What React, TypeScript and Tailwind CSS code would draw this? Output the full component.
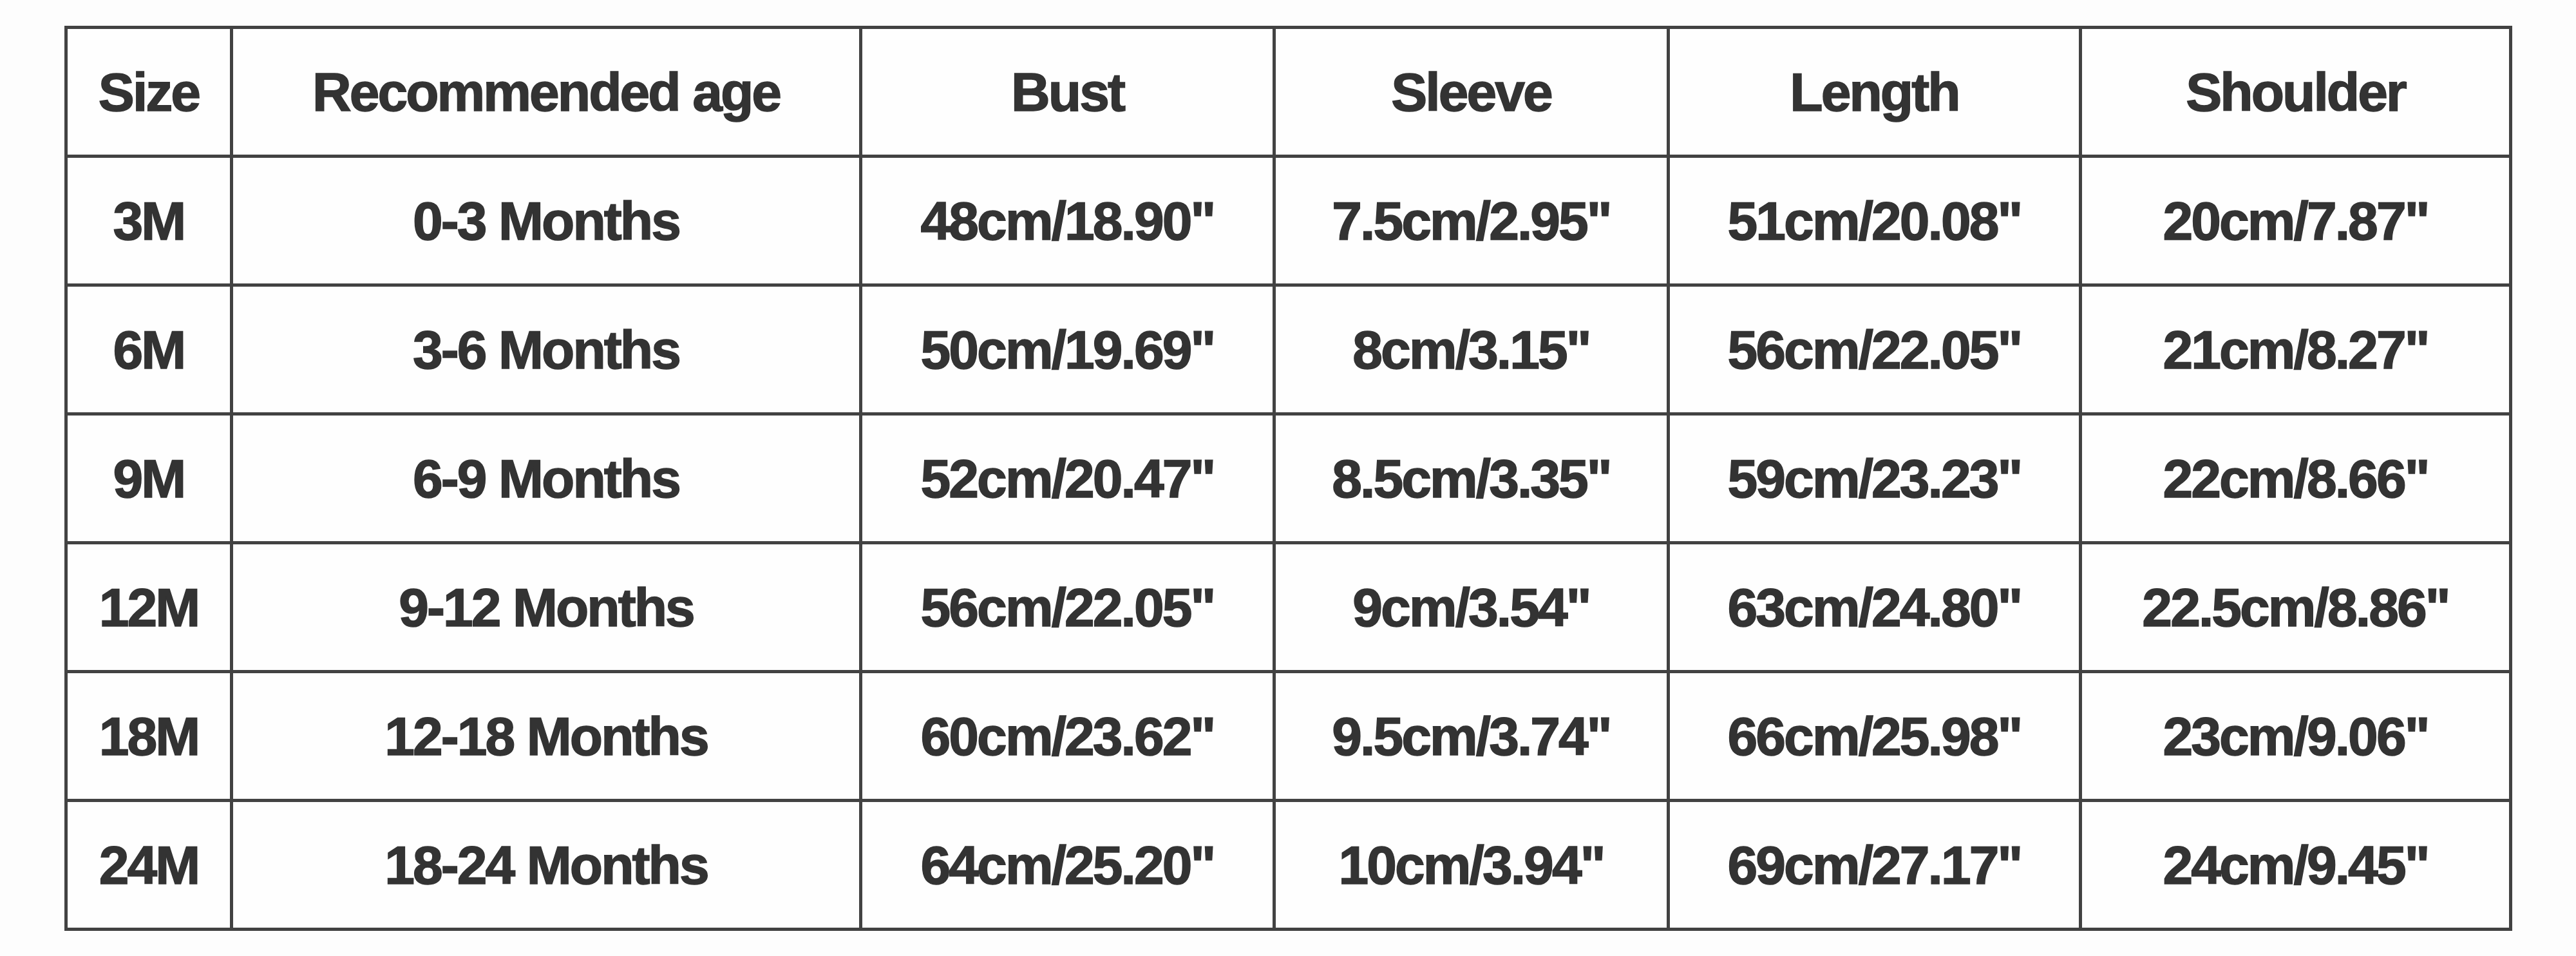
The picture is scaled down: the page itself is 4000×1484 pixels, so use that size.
import React from "react";

const headers = ["Size", "Recommended age", "Bust", "Sleeve", "Length", "Shoulder"];

const rows: string[][] = [
  ["3M", "0-3 Months", '48cm/18.90"', '7.5cm/2.95"', '51cm/20.08"', '20cm/7.87"'],
  ["6M", "3-6 Months", '50cm/19.69"', '8cm/3.15"', '56cm/22.05"', '21cm/8.27"'],
  ["9M", "6-9 Months", '52cm/20.47"', '8.5cm/3.35"', '59cm/23.23"', '22cm/8.66"'],
  ["12M", "9-12 Months", '56cm/22.05"', '9cm/3.54"', '63cm/24.80"', '22.5cm/8.86"'],
  ["18M", "12-18 Months", '60cm/23.62"', '9.5cm/3.74"', '66cm/25.98"', '23cm/9.06"'],
  ["24M", "18-24 Months", '64cm/25.20"', '10cm/3.94"', '69cm/27.17"', '24cm/9.45"'],
];

function Cell({ children }: { children: React.ReactNode }) {
  return (
    <div className="flex items-center justify-center bg-[#fefefe] whitespace-nowrap">
      {children}
    </div>
  );
}

export default function App() {
  return (
    <div className="w-[4000px] h-[1484px] bg-[#fdfdfd] pt-[40px] pl-[100px] font-['Liberation_Sans',Arial,sans-serif]">
      <div className="grid w-fit grid-cols-[252px_972px_637px_607px_635px_663px] auto-rows-[195px] gap-[5px] p-[5px] bg-[#424242] text-[84px] leading-none font-bold tracking-[-0.035em] text-[#333333] [-webkit-text-stroke:1.5px_#333333]">
        {headers.map((h) => (
          <Cell key={h}>{h}</Cell>
        ))}
        {rows.map((r) =>
          r.map((c, i) => <Cell key={r[0] + i}>{c}</Cell>)
        )}
      </div>
    </div>
  );
}
